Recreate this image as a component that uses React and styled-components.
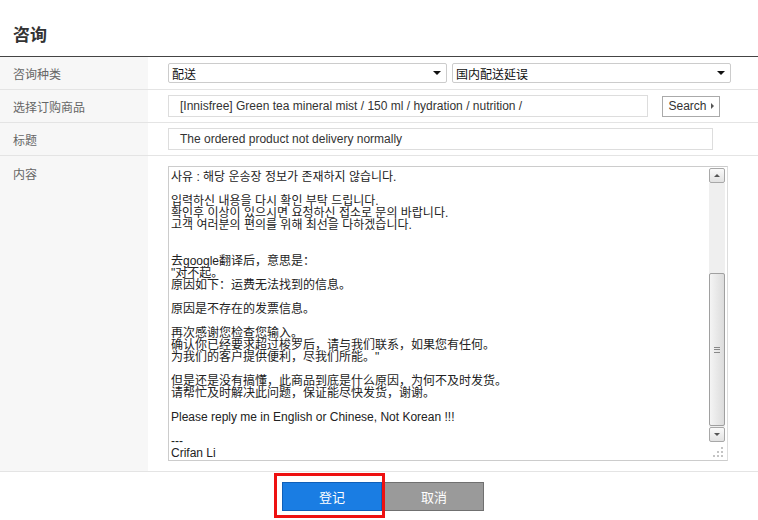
import React from "react";
import styled, { createGlobalStyle } from "styled-components";

const GlobalStyle = createGlobalStyle`
  html, body {
    margin: 0;
    padding: 0;
    background: #ffffff;
  }
  body {
    font-family: "Liberation Sans", "Noto Sans CJK SC", "Noto Sans CJK KR", sans-serif;
    font-size: 12px;
    color: #333333;
  }
`;

const Page = styled.div`
  width: 758px;
  height: 520px;
  overflow: hidden;
`;

const Header = styled.div`
  height: 57px;
  border-bottom: 1px solid #444444;
  display: flex;
  align-items: flex-end;
  padding: 0 0 10px 13px;
  box-sizing: border-box;
`;

const Title = styled.h2`
  margin: 0;
  font-size: 17px;
  font-weight: bold;
  color: #333333;
  line-height: 20px;
`;

const Row = styled.div`
  display: grid;
  grid-template-columns: 148px 1fr;
  border-bottom: 1px solid #e4e4e4;
  height: ${(p) => p.$h}px;
  box-sizing: border-box;
`;

const Label = styled.div`
  background: #f7f7f7;
  color: #666666;
  padding-left: 13px;
  display: flex;
  align-items: ${(p) => (p.$top ? "flex-start" : "center")};
  padding-top: ${(p) => (p.$top ? "9px" : "0")};
  font-size: 12px;
`;

const Field = styled.div`
  display: flex;
  align-items: ${(p) => (p.$top ? "flex-start" : "center")};
  padding-left: 20px;
  padding-top: ${(p) => (p.$top ? "10px" : "0")};
  gap: ${(p) => p.$gap || 0}px;
`;

const Select = styled.div`
  width: ${(p) => p.$w}px;
  height: 20px;
  box-sizing: border-box;
  border: 1px solid #cccccc;
  border-radius: 2px;
  display: flex;
  align-items: center;
  justify-content: space-between;
  padding: 0 5px 0 3px;
  color: #111111;
  font-size: 12px;
`;

const Caret = styled.span`
  width: 0;
  height: 0;
  border-left: 4px solid transparent;
  border-right: 4px solid transparent;
  border-top: 4px solid #111111;
`;

const Input = styled.div`
  width: ${(p) => p.$w}px;
  height: 22px;
  box-sizing: border-box;
  border: 1px solid #dddddd;
  display: flex;
  align-items: center;
  padding-left: 11px;
  color: #333333;
  font-size: 12px;
  white-space: nowrap;
`;

const SearchButton = styled.button`
  margin-left: 14px;
  height: 21px;
  width: 58px;
  box-sizing: border-box;
  border: 1px solid #aaaaaa;
  background: #ffffff;
  font-family: inherit;
  font-size: 12px;
  color: #333333;
  display: flex;
  align-items: center;
  justify-content: center;
  gap: 4px;
  padding: 0;
`;

const SmallArrow = styled.span`
  width: 0;
  height: 0;
  border-top: 3px solid transparent;
  border-bottom: 3px solid transparent;
  border-left: 3px solid #555555;
`;

const TextBox = styled.div`
  width: 560px;
  height: 295px;
  box-sizing: border-box;
  border: 1px solid #cccccc;
  border-right-color: #dddddd;
  display: flex;
  padding: 1px 1px 1px 0;
`;

const TextContent = styled.div`
  flex: 1;
  padding: 3px 0 0 2px;
  font-size: 12px;
  line-height: 12px;
  color: #222222;
  white-space: pre;
`;

const Scrollbar = styled.div`
  width: 16px;
  display: flex;
  flex-direction: column;
  margin-right: 1px;
`;

const ScrollBtn = styled.div`
  height: 15px;
  box-sizing: border-box;
  border: 1px solid #a8a8a8;
  border-radius: 2px;
  background: linear-gradient(#fafafa, #e2e2e2);
  display: flex;
  align-items: center;
  justify-content: center;
`;

const Tri = styled.span`
  width: 0;
  height: 0;
  border-left: 3px solid transparent;
  border-right: 3px solid transparent;
  ${(p) =>
    p.$up
      ? "border-bottom: 3px solid #555555;"
      : "border-top: 3px solid #555555;"}
`;

const Track = styled.div`
  flex: 1;
  background: #efefef;
  display: flex;
  flex-direction: column;
  justify-content: flex-end;
  padding-bottom: 1px;
`;

const Thumb = styled.div`
  height: 153px;
  box-sizing: border-box;
  border: 1px solid #a0a0a0;
  border-radius: 2px;
  background: linear-gradient(to right, #f4f4f4, #dcdcdc);
  display: flex;
  align-items: center;
  justify-content: center;
`;

const Grip = styled.div`
  width: 6px;
  height: 6px;
  border-top: 1px solid #888888;
  border-bottom: 1px solid #888888;
  box-sizing: border-box;
  position: relative;
  &::after {
    content: "";
    position: absolute;
    left: 0;
    right: 0;
    top: 1px;
    border-top: 1px solid #888888;
  }
`;

const Resize = styled.div`
  height: 17px;
  position: relative;
  &::before {
    content: "";
    position: absolute;
    right: 2px;
    bottom: 2px;
    width: 2px;
    height: 2px;
    background: #c4c4c4;
    box-shadow: -4px 0 #c4c4c4, -8px 0 #c4c4c4, 0 -4px #c4c4c4,
      -4px -4px #c4c4c4, 0 -8px #c4c4c4;
  }
`;

const Footer = styled.div`
  display: flex;
  justify-content: center;
  gap: 2px;
  padding: 10px 0 0 8px;
`;

const Highlight = styled.div`
  position: relative;
  display: flex;
  &::after {
    content: "";
    position: absolute;
    left: -8px;
    right: -3px;
    top: -9px;
    bottom: -7px;
    border: 3px solid #ee1111;
    pointer-events: none;
  }
`;

const ActionButton = styled.button`
  width: 100px;
  height: 29px;
  box-sizing: border-box;
  border: 1px solid ${(p) => (p.$primary ? "#0f5fb8" : "#707070")};
  background: ${(p) => (p.$primary ? "#1a7de3" : "#9a9a9a")};
  color: #ffffff;
  font-family: inherit;
  font-size: 13px;
  padding: 0;
`;

const content = `사유 : 해당 운송장 정보가 존재하지 않습니다.

입력하신 내용을 다시 확인 부탁 드립니다.
확인후 이상이 있으시면 요청하신 접소로 문의 바랍니다.
고객 여러분의 편의를 위해 최선을 다하겠습니다.


去google翻译后，意思是：
"对不起。
原因如下：运费无法找到的信息。

原因是不存在的发票信息。

再次感谢您检查您输入。
确认你已经要求超过梭罗后，请与我们联系，如果您有任何。
为我们的客户提供便利，尽我们所能。"

但是还是没有搞懂，此商品到底是什么原因，为何不及时发货。
请帮忙及时解决此问题，保证能尽快发货，谢谢。

Please reply me in English or Chinese, Not Korean !!!

---
Crifan Li`;

export default function App() {
  return (
    <Page>
      <GlobalStyle />
      <Header>
        <Title>咨询</Title>
      </Header>
      <Row $h={33}>
        <Label>咨询种类</Label>
        <Field $gap={5}>
          <Select $w={279}>
            <span>配送</span>
            <Caret />
          </Select>
          <Select $w={279}>
            <span>国内配送延误</span>
            <Caret />
          </Select>
        </Field>
      </Row>
      <Row $h={33}>
        <Label>选择订购商品</Label>
        <Field>
          <Input $w={480}>
            [Innisfree] Green tea mineral mist / 150 ml / hydration / nutrition /
          </Input>
          <SearchButton>
            Search <SmallArrow />
          </SearchButton>
        </Field>
      </Row>
      <Row $h={33}>
        <Label>标题</Label>
        <Field>
          <Input $w={545}>The ordered product not delivery normally</Input>
        </Field>
      </Row>
      <Row $h={316}>
        <Label $top>内容</Label>
        <Field $top>
          <TextBox>
            <TextContent>{content}</TextContent>
            <Scrollbar>
              <ScrollBtn>
                <Tri $up />
              </ScrollBtn>
              <Track>
                <Thumb>
                  <Grip />
                </Thumb>
              </Track>
              <ScrollBtn>
                <Tri />
              </ScrollBtn>
              <Resize />
            </Scrollbar>
          </TextBox>
        </Field>
      </Row>
      <Footer>
        <Highlight>
          <ActionButton $primary>登记</ActionButton>
        </Highlight>
        <ActionButton>取消</ActionButton>
      </Footer>
    </Page>
  );
}
